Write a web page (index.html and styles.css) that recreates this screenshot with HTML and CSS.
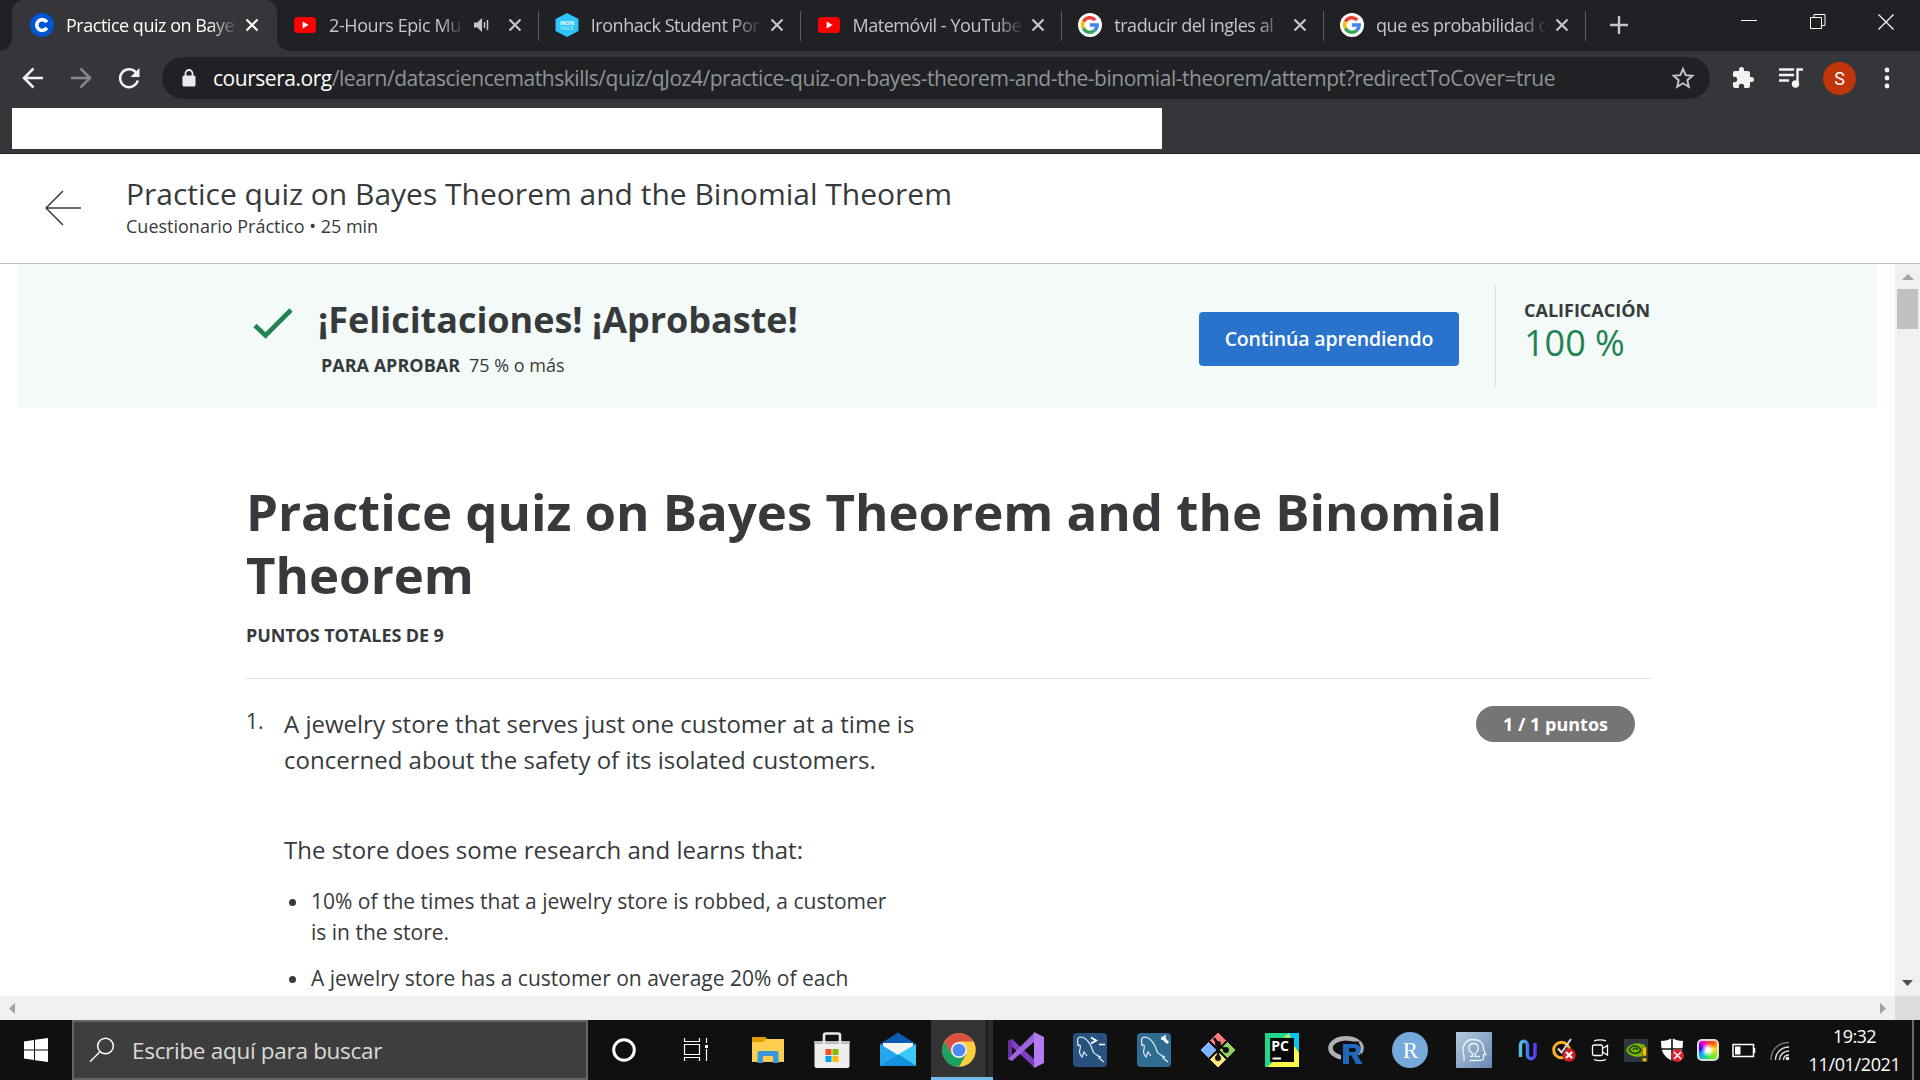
FILE: index.html
```html
<!DOCTYPE html>
<html lang="es">
<head>
<meta charset="utf-8">
<title>Practice quiz on Bayes Theorem and the Binomial Theorem</title>
<link rel="stylesheet" href="styles.css">
</head>
<body>
<svg class="defs" width="0" height="0" aria-hidden="true">
  <symbol id="close" viewBox="0 0 14 14"><path d="M1.5 1.5l11 11M12.5 1.5l-11 11" stroke="currentColor" stroke-width="2.2" fill="none"/></symbol>
  <symbol id="youtube" viewBox="0 0 22 16"><rect width="22" height="16" rx="3.6" fill="#f00"/><path d="M8.6 4.6v6.8l6-3.4z" fill="#fff"/></symbol>
  <symbol id="google" viewBox="0 0 24 24"><circle cx="12" cy="12" r="12" fill="#fff"/><g fill="none" stroke-width="3.4"><path d="M5.4 8.6A7.3 7.3 0 0 1 17.2 7" stroke="#ea4335"/><path d="M5.5 15.3a7.3 7.3 0 0 1 0-6.7" stroke="#fbbc05"/><path d="M16.7 17.5A7.3 7.3 0 0 1 5.4 15.2" stroke="#34a853"/><path d="M12 12h7.2a7.3 7.3 0 0 1-2.6 5.5" stroke="#4285f4"/></g></symbol>
</svg>

<header class="tabs">
  <div class="tab active">
    <svg class="fav" viewBox="0 0 24 24"><circle cx="12" cy="12" r="12" fill="#0056d2"/><path d="M16.8 9.2A5.4 5.4 0 1 0 16.8 14.8" fill="none" stroke="#fff" stroke-width="3.6"/></svg>
    <span class="label">Practice quiz on Baye</span>
    <svg class="x"><use href="#close"/></svg>
  </div>
  <div class="tab sep">
    <svg class="fav"><use href="#youtube" x="1" y="4" width="22" height="16"/></svg>
    <span class="label short">2-Hours Epic Mu</span>
    <svg class="audio" viewBox="0 0 16 14"><path d="M0 4.5h3.4L8 0v14L3.4 9.500H0z" fill="#c4c7ca"/><path d="M10.500 4v6M13.500 2v10" stroke="#c4c7ca" stroke-width="1.5"/></svg>
    <svg class="x"><use href="#close"/></svg>
  </div>
  <div class="tab sep">
    <svg class="fav" viewBox="0 0 24 24"><path d="M12 0l11.500 6v12L12 24 .5 18V6z" fill="#2dc5fa"/><text x="12" y="11.500" class="iron">IRON</text><text x="12" y="17" class="hack">HACK</text></svg>
    <span class="label">Ironhack Student Por</span>
    <svg class="x"><use href="#close"/></svg>
  </div>
  <div class="tab sep">
    <svg class="fav"><use href="#youtube" x="1" y="4" width="22" height="16"/></svg>
    <span class="label">Matemóvil - YouTube</span>
    <svg class="x"><use href="#close"/></svg>
  </div>
  <div class="tab sep">
    <svg class="fav"><use href="#google"/></svg>
    <span class="label">traducir del ingles al</span>
    <svg class="x"><use href="#close"/></svg>
  </div>
  <div class="tab sep">
    <svg class="fav"><use href="#google"/></svg>
    <span class="label">que es probabilidad c</span>
    <svg class="x"><use href="#close"/></svg>
  </div>
  <svg class="plus" viewBox="0 0 18 18"><path d="M9 0v18M0 9h18" stroke="#c4c7ca" stroke-width="2.4"/></svg>
  <div class="winctl">
    <svg viewBox="0 0 16 16"><path d="M0 6.500h16" stroke="#fff"/></svg>
    <svg viewBox="0 0 16 16"><path d="M.5 3.500h11v11H.5zM4 3V.5h11v11H12" stroke="#fff" fill="none"/></svg>
    <svg viewBox="0 0 16 16"><path d="M.5.5l15 15M15.500.5l-15 15" stroke="#fff" stroke-width="1.200"/></svg>
  </div>
</header>

<nav class="toolbar">
  <svg class="tb" viewBox="0 0 24 24"><path d="M22 12H3.500M12.500 2.500L3 12l9.500 9.500" stroke="#f1f3f4" stroke-width="2.500" fill="none"/></svg>
  <svg class="tb" viewBox="0 0 24 24"><path d="M2 12h18.500M11.500 2.500L21 12l-9.500 9.500" stroke="#86888b" stroke-width="2.500" fill="none"/></svg>
  <svg class="tb" viewBox="0 0 24 24"><path d="M19.600 7.200A9 9 0 1 0 20.800 14.500" stroke="#f1f3f4" stroke-width="2.500" fill="none"/><path d="M22.500 2v9h-9z" fill="#f1f3f4"/></svg>
  <div class="omnibox">
    <svg class="lock" viewBox="0 0 14 18"><rect x=".5" y="6.500" width="13" height="11" rx="1.500" fill="#e8eaed"/><path d="M3.500 7V4.500a3.500 3.500 0 0 1 7 0V7" fill="none" stroke="#e8eaed" stroke-width="1.800"/></svg>
    <span class="url"><b>coursera.org</b>/learn/datasciencemathskills/quiz/qJoz4/practice-quiz-on-bayes-theorem-and-the-binomial-theorem/attempt?redirectToCover=true</span>
    <svg class="star" viewBox="0 0 24 24"><path d="M12 3l2.700 6.200 6.700.6-5.100 4.400 1.500 6.600L12 17.300l-5.800 3.500 1.500-6.600-5.100-4.400 6.700-.6z" fill="none" stroke="#c4c7ca" stroke-width="1.900"/></svg>
  </div>
  <svg class="tb" viewBox="0 0 24 24"><path d="M20.500 11H19V7a2 2 0 0 0-2-2h-4V3.500a2.500 2.500 0 0 0-5 0V5H4a2 2 0 0 0-2 2v3.800h1.500a2.700 2.700 0 0 1 0 5.400H2V20a2 2 0 0 0 2 2h3.800v-1.500a2.700 2.700 0 0 1 5.400 0V22H17a2 2 0 0 0 2-2v-4h1.500a2.500 2.500 0 0 0 0-5z" fill="#f1f3f4"/></svg>
  <svg class="tb" viewBox="0 0 24 24"><path d="M0 3.500h15M0 9h15M0 14.500h10M18.500 18V3.500H24" stroke="#f1f3f4" stroke-width="2.400" fill="none"/><circle cx="16.500" cy="18" r="3.700" fill="#f1f3f4"/></svg>
  <span class="avatar">S</span>
  <svg class="dots" viewBox="0 0 6 22"><g fill="#f1f3f4"><circle cx="3" cy="3" r="2.400"/><circle cx="3" cy="11" r="2.400"/><circle cx="3" cy="19" r="2.400"/></g></svg>
</nav>
<div class="bookmarks"><div class="blank"></div></div>

<section class="page-head">
  <svg class="back" viewBox="0 0 36 36"><path d="M36 18H1.500M18 1L1 18l17 17" fill="none" stroke="#373a3c" stroke-width="1.500"/></svg>
  <div>
    <div class="course">Practice quiz on Bayes Theorem and the Binomial Theorem</div>
    <div class="kind">Cuestionario Práctico • 25 min</div>
  </div>
</section>

<div class="frame">
  <main class="view">
    <section class="banner">
      <svg class="check" viewBox="0 0 42 34"><path d="M3 18.500L13.500 28.500 39 3" fill="none" stroke="#1f8354" stroke-width="4.600"/></svg>
      <div class="congrats">
        <div class="big">¡Felicitaciones! ¡Aprobaste!</div>
        <div class="pass"><b>PARA APROBAR</b><span>75 % o más</span></div>
      </div>
      <div class="go">Continúa aprendiendo</div>
      <div class="grade">
        <div class="gl">CALIFICACIÓN</div>
        <div class="gv">100 %</div>
      </div>
    </section>
    <section class="quiz">
      <h1>Practice quiz on Bayes Theorem and the Binomial<br>Theorem</h1>
      <div class="total">PUNTOS TOTALES DE 9</div>
      <div class="question">
        <span class="num">1.</span>
        <div class="body">
          <p>A jewelry store that serves just one customer at a time is<br>concerned about the safety of its isolated customers.</p>
          <p>The store does some research and learns that:</p>
          <ul>
            <li>10% of the times that a jewelry store is robbed, a customer<br>is in the store.</li>
            <li>A jewelry store has a customer on average 20% of each</li>
          </ul>
        </div>
        <span class="pill">1 / 1 puntos</span>
      </div>
    </section>
  </main>
  <div class="vbar">
    <svg viewBox="0 0 25 25"><path d="M7 16h12l-6-6z" fill="#a3a3a3"/></svg>
    <i class="thumb"></i>
    <svg class="down" viewBox="0 0 25 25"><path d="M7 9h11l-5.500 6z" fill="#505050"/></svg>
  </div>
</div>
<div class="hbar">
  <svg viewBox="0 0 24 24"><path d="M15 7v11l-6-5.500z" fill="#a3a3a3"/></svg>
  <svg viewBox="0 0 24 24"><path d="M9 7v11l6-5.500z" fill="#a3a3a3"/></svg>
  <i class="corner"></i>
</div>

<footer class="taskbar">
  <div class="start"><svg width="24" height="24" viewBox="0 0 24 24"><path d="M0 3.400L10 2v9.500H0zM11 1.800L24 0v11.500H11zM0 12.500h10V22L0 20.600zM11 12.500h13V24l-13-1.800z" fill="#fff"/></svg></div>
  <div class="search"><svg class="lens" width="26" height="26" viewBox="0 0 26 26"><circle cx="16.500" cy="9" r="7.800" fill="none" stroke="#fff" stroke-width="1.500"/><path d="M11 14.800L1 24.800" stroke="#fff" stroke-width="1.500"/></svg><span>Escribe aquí para buscar</span></div>
  <div class="apps">
    <div class="app"><svg viewBox="0 0 36 36"><circle cx="18" cy="18" r="10.300" fill="none" stroke="#fff" stroke-width="3"/></svg></div>
    <div class="app wide"><svg viewBox="0 0 36 36"><path d="M6.500 6v3.500h15V6M6.500 12.500h15v10h-15zM6.500 29v-3.500h15V29M28.500 6v5M28.500 17v12" fill="none" stroke="#fff" stroke-width="1.200"/><path d="M27 13h3v3h-3z" fill="#fff"/></svg></div>
    <div class="app"><svg viewBox="0 0 36 36"><path d="M2 5h13l2 2h17v23H2z" fill="#ffce4f"/><path d="M2 5h13l1.500 2-3 3H2z" fill="#e09d00"/><path d="M7.500 31V21a2 2 0 0 1 2-2h17a2 2 0 0 1 2 2v10H23v-7H13v7z" fill="#3a97dc"/></svg></div>
    <div class="app"><svg viewBox="0 0 36 36"><path d="M.5 9h35v25a2 2 0 0 1-2 2h-31a2 2 0 0 1-2-2z" fill="#eee"/><path d="M.5 9h35v3H.5z" fill="#bdbdbd"/><path d="M10 12V3.500a2 2 0 0 1 2-2h12a2 2 0 0 1 2 2V12" fill="none" stroke="#e8e8e8" stroke-width="2.600"/><path d="M11.500 17h6v6h-6z" fill="#f25022"/><path d="M18.500 17h6v6h-6z" fill="#7fba00"/><path d="M11.500 24h6v6h-6z" fill="#00a4ef"/><path d="M18.500 24h6v6h-6z" fill="#ffb900"/></svg></div>
    <div class="app mail"><svg viewBox="0 0 36 36"><path d="M0 12L18 .5 36 12v8H0z" fill="#0a5cb0"/><path d="M3 11h30v12H3z" fill="#f4f4f4"/><path d="M0 12l36 22H0z" fill="#24a7ee"/><path d="M36 12v22L18 22.500z" fill="#3ccbf8"/><path d="M18 22.800L36 34H0z" fill="#1490df"/></svg></div>
    <div class="app current"><svg viewBox="0 0 36 36"><circle cx="18" cy="18" r="16.800" fill="#ffcd40"/><path d="M3.400 9.600A16.800 16.800 0 0 1 32.500 9.600H18L10.700 22.200z" fill="#dd5144"/><path d="M3.400 9.600A16.800 16.800 0 0 0 18 34.800L25.300 22.200 10.700 22.200z" fill="#1da160"/><circle cx="18" cy="18" r="8" fill="#f1f1f1"/><circle cx="18" cy="18" r="6.300" fill="#4c8bf5"/></svg></div>
    <div class="app"><svg viewBox="0 0 36 36"><path d="M0 9l4-2 23 21v8L0 11z" fill="#7c3fc4"/><path d="M0 9l4-2v22l-4-2z" fill="#68309f"/><path d="M0 27L27 0v9L4 29z" fill="#9e63df"/><path d="M26 0l10 5v26l-10 5z" fill="#b57bf0"/></svg></div>
    <div class="app"><svg viewBox="0 0 36 36"><rect x="1" y="1" width="34" height="34" rx="4" fill="#27527f"/><path d="M6 14C6 10 4 6 8 5c5 0 9 5 11 9s1 7 6 9c2 2 4 2 4 2l-2 1 5 4M6 14c2-2 3-1 2 3-1 3 0 6 2 8l2-5 3 4" fill="none" stroke="#e6edf4" stroke-width="1.200"/><path d="M19 5.500l5 3-5 3" fill="none" stroke="#fff" stroke-width="2"/><path d="M27 12.500h6" stroke="#fff" stroke-width="1.500"/></svg></div>
    <div class="app"><svg viewBox="0 0 36 36"><rect x="1" y="1" width="34" height="34" rx="4" fill="#2e6d91"/><path d="M6 14C6 10 4 6 8 5c5 0 9 5 11 9s1 7 6 9c2 2 4 2 4 2l-2 1 5 4M6 14c2-2 3-1 2 3-1 3 0 6 2 8l2-5 3 4" fill="none" stroke="#e6edf4" stroke-width="1.200"/><path d="M26 5l6 6" stroke="#fff" stroke-width="3"/><path d="M25 7h4V3" stroke="#fff" stroke-width="1.500" fill="none"/></svg></div>
    <div class="app"><svg viewBox="0 0 36 36"><g stroke="#101010" stroke-width="1"><path d="M18 0l8.500 8.500L18 17 9.500 8.500z" fill="#ff7b7b"/><path d="M8.500 9.500L17 18l-8.500 8.500L0 18z" fill="#80b3ff"/><path d="M27.500 9.500L36 18l-8.500 8.500L19 18z" fill="#8dd35f"/><path d="M18 19l8.500 8.500L18 36l-8.500-8.500z" fill="#ffe680"/></g><path d="M14 6l4 6v14M18 13l8 5" stroke="#101010" stroke-width="2.500" fill="none"/><circle cx="18" cy="12" r="3" fill="#101010"/><circle cx="26" cy="18" r="3" fill="#101010"/><circle cx="18" cy="26" r="3" fill="#101010"/></svg></div>
    <div class="app"><svg viewBox="0 0 36 36"><path d="M1 1h34v34H1z" fill="#21d789"/><path d="M21 1h14v18z" fill="#07c3f2"/><path d="M25 1l3 10 7 10v14H3l10-8z" fill="#fcf84a"/><path d="M19 5l6-4 2 6z" fill="#a6eb60"/><path d="M6 6h24v24H6z" fill="#080808"/><path d="M8.500 25.500h8.500v2H8.500z" fill="#fff"/><text x="7.200" y="19" class="pc">PC</text></svg></div>
    <div class="app"><svg viewBox="0 0 36 36"><ellipse cx="18" cy="16" rx="15.500" ry="9.800" fill="none" stroke="#b0b1b6" stroke-width="4.600"/><path d="M13 9.500h20v20H13z" fill="#101010"/><path d="M31.500 9.500c4 5 2 10-1.500 13" fill="none" stroke="#b0b1b6" stroke-width="2.500"/><path d="M15 12h11c9 0 8 10 3 11l5.500 9h-6.500l-4.500-8.500h-2.500V32h-6zM21 16v4h5c2.500 0 2.500-4 0-4z" fill="#2068bd" fill-rule="evenodd"/></svg></div>
    <div class="app"><svg viewBox="0 0 36 36"><circle cx="18" cy="18" r="18" fill="#75aadb"/><text x="18.500" y="25.500" class="rs">R</text></svg></div>
    <div class="app"><svg viewBox="0 0 36 36"><defs><linearGradient id="sp" x2="1" y2="1"><stop stop-color="#b4c9dc"/><stop offset="1" stop-color="#6789b3"/></linearGradient></defs><path d="M0 0h36v36H0z" fill="url(#sp)"/><path d="M8 29v-5C5 15 9 7.500 17 7.500c8 0 11 5 10.500 10l2.500 5h-2.500v4c0 2-3 2-6 2h-8M14 24.500h2.500v-3c-6-4-4-10 1-10s7 6 1.500 10v3H24" fill="none" stroke="#eef4fa" stroke-width="1.300"/></svg></div>
  </div>
  <div class="tray">
    <svg viewBox="0 0 24 24"><defs><linearGradient id="nn" x2="1"><stop stop-color="#55c3d8"/><stop offset=".6" stop-color="#3e6cf5"/><stop offset="1" stop-color="#5a3df0"/></linearGradient></defs><path d="M4.500 19V7.500c0-6 7-5.500 7 0v8.500c0 6.500 7.500 6 7.500 0V5" fill="none" stroke="url(#nn)" stroke-width="3.400"/></svg>
    <svg viewBox="0 0 24 24"><circle cx="9.500" cy="12" r="7.800" fill="none" stroke="#f9b11f" stroke-width="3"/><path d="M6 10.500l3.500 4L19 1" fill="none" stroke="#ddd" stroke-width="2"/><circle cx="17" cy="17" r="6.700" fill="#cf2027"/><path d="M14 14l6 6M20 14l-6 6" stroke="#fff" stroke-width="2.300"/></svg>
    <svg viewBox="0 0 24 24"><g fill="none" stroke="#fff" stroke-width="1.300"><rect x="4.500" y="7" width="10" height="10.500" rx="1.500"/><path d="M14.500 10.500l5-3v9.500l-5-3M6 3c3-1.600 9-1.600 12 0M6 21.500c3 1.600 9 1.600 12 0"/></g></svg>
    <svg viewBox="0 0 24 24"><path d="M0 1h24v23H0z" fill="#2e3640"/><path d="M2 12c4-8 13-7 19-5v11C11 20 4 18 2 12z" fill="#76b900"/><path d="M5 12c4-7 10-4 12 0-3 5-9 4-12 0zm4 0c2-3 4-2 5 0" fill="none" stroke="#263b18" stroke-width="1.500"/><path d="M18.500 9h4v9h-4zM18.500 20h4v3.500h-4z" fill="#f5c400" stroke="#5b4300" stroke-width=".6"/></svg>
    <svg viewBox="0 0 24 24"><path d="M12 0c3 2 7 3 11 3 0 10-2 15-11 20C3 18 1 13 1 3c4 0 8-1 11-3z" fill="#fff"/><path d="M12 0v23M0 11h24" stroke="#101010" stroke-width="1.600"/><circle cx="17.500" cy="17.500" r="6.500" fill="#d9262e"/><path d="M14 14l7 7M21 14l-7 7" stroke="#fff" stroke-width="1.500"/></svg>
    <span class="rgb"></span>
    <svg viewBox="0 0 24 24"><path d="M1 6.500h20.500v12H1zM22.500 10v5" fill="none" stroke="#fff" stroke-width="1.500"/><path d="M3 8.500h5.500v8H3z" fill="#fff"/></svg>
    <svg viewBox="0 0 24 24"><g fill="none" stroke-width="1.400"><path d="M3 22C3 12 10 4.500 21 4.500" stroke="#777"/><path d="M7.500 22c0-7.500 6-13 13.500-13M11.500 22c0-5 4-9 9.500-9M15.500 22c0-3 2-5 5.500-5" stroke="#ddd"/></g><circle cx="19.500" cy="20.500" r="1.800" fill="#fff"/></svg>
  </div>
  <div class="clock"><span class="time">19:32</span><span class="date">11/01/2021</span></div>
  <i class="peek"></i>
</footer>
</body>
</html>
```
FILE: styles.css
```css
* { box-sizing: border-box; }
body { margin: 0; width: 1920px; height: 1080px; overflow: hidden; background: #fff; color: #373a3c; font-family: "Open Sans", "Noto Sans", sans-serif; display: flex; flex-direction: column; }
svg { display: block; flex: none; }
.defs { position: absolute; }

/* Tab strip */
.tabs { height: 51px; flex: none; background: linear-gradient(90deg, #202124 12px, #35363a 12px 277px, #202124 277px); background: #202124; display: flex; padding-left: 12px; color: #c4c7ca; }
.tab { width: 261.750px; height: 51px; flex: none; display: flex; align-items: center; padding: 0 17px 2px 16px; font-size: 18px; letter-spacing: -0.460px; }
.tab.active { width: 265px; background: #35363a; color: #fff; border-radius: 12px 12px 0 0; padding: 0 18px 2px 18px; position: relative; letter-spacing: -0.480px; }
.tab.active::before, .tab.active::after { content: ""; position: absolute; bottom: 0; width: 12px; height: 12px; }
.tab.active::before { left: -12px; background: radial-gradient(circle at 0 0, transparent 11.500px, #35363a 12px); }
.tab.active::after { right: -12px; background: radial-gradient(circle at 100% 0, transparent 11.500px, #35363a 12px); }
.tab.sep { position: relative; }
.tab.sep::after { content: ""; position: absolute; right: 0; top: 11px; width: 1px; height: 30px; background: #5b5d61; }
.fav { width: 24px; height: 24px; }
.label { margin-left: 12px; width: 170px; flex: none; overflow: hidden; white-space: nowrap; line-height: 26px; -webkit-mask-image: linear-gradient(90deg, #000 84%, transparent 101%); mask-image: linear-gradient(90deg, #000 84%, transparent 101%); }
.label.short { width: 134px; letter-spacing: -0.400px; }
.audio { width: 16px; height: 14px; margin-left: 11px; }
.x { width: 14px; height: 14px; margin-left: auto; }
.iron { font: bold 5.500px "Open Sans", sans-serif; fill: #fff; text-anchor: middle; letter-spacing: 0; }
.hack { font: 5px "Open Sans", sans-serif; fill: #d4f3fe; text-anchor: middle; letter-spacing: 0; }
.plus { width: 18px; height: 18px; margin: 16px 0 0 24px; }
.winctl { margin-left: auto; padding: 14px 26px 0 0; display: flex; gap: 52.500px; }
.winctl svg { width: 16px; height: 16px; }

/* Address row */
.toolbar { height: 57px; flex: none; background: #35363a; display: flex; align-items: center; padding: 0 30px 3px 21px; gap: 24px; }
.tb { width: 24px; height: 24px; }
.omnibox { width: 1548px; flex: none; height: 42px; margin: 0 -3px; border-radius: 21px; background: #202124; display: flex; align-items: center; padding: 0 15px 0 20px; }
.lock { width: 14px; height: 18px; }
.url { margin-left: 17px; font-size: 21px; line-height: 30px; letter-spacing: -0.465px; color: #909397; white-space: nowrap; }
.url b { font-weight: 400; color: #fff; }
.star { width: 24px; height: 24px; margin-left: auto; }
.avatar { width: 33px; height: 33px; flex: none; border-radius: 50%; background: #c1350b; color: #fff; font: 18px/33px Roboto, sans-serif; text-align: center; margin-left: -4px; }
.dots { width: 6px; height: 22px; margin-left: 4px; }
.bookmarks { height: 46px; flex: none; background: #35363a; border-bottom: 1px solid #27282a; padding-left: 12px; }
.blank { width: 1150px; height: 41px; background: #fff; }

/* Page header */
.page-head { height: 110px; flex: none; border-bottom: 1px solid #bdbdbd; display: flex; padding: 20px 0 0 45px; gap: 45px; }
.back { width: 36px; height: 36px; margin-top: 16px; }
.course { font-size: 30px; line-height: 40px; }
.kind { font-size: 18px; line-height: 24px; }

.frame { height: 732px; flex: none; display: flex; overflow: hidden; }
.view { width: 1895px; padding: 0 18px; overflow: hidden; }
.banner { height: 144px; background: #f4faf8; display: flex; padding-left: 234px; }
.check { width: 42px; height: 34px; margin-top: 43px; }
.congrats { width: 905px; padding: 32px 0 0 24px; }
.big { font-size: 36px; line-height: 48px; font-weight: 700; letter-spacing: -0.030px; }
.pass { font-size: 18px; line-height: 24px; margin: 9px 0 0 3px; display: flex; gap: 9px; }
.go { width: 260px; height: 54px; flex: none; margin-top: 48px; border-radius: 4px; background: #2a73cc; color: #fff; font-size: 19.500px; font-weight: 600; letter-spacing: -0.150px; line-height: 54px; text-align: center; }
.grade { margin: 21px 0 0 36px; height: 102px; border-left: 1px solid #dcdfde; padding: 13px 0 0 28px; }
.gl { font-size: 18px; line-height: 24px; font-weight: 700; }
.gv { font-size: 36px; line-height: 42px; color: #1f8354; }

.quiz { width: 1405px; margin-left: 228px; padding-top: 72px; }
h1 { margin: 0; font-size: 51px; line-height: 63px; font-weight: 700; letter-spacing: -0.030px; white-space: nowrap; }
.total { font-size: 18px; line-height: 24px; font-weight: 700; letter-spacing: -0.100px; padding: 17px 0 31px; border-bottom: 1px solid #e1e1e1; }
.question { display: flex; padding-top: 27px; white-space: nowrap; }
.num { width: 38px; font-size: 21px; line-height: 30px; }
.body { width: 1192px; }
.body p { margin: 0 0 54px; font-size: 24px; line-height: 36px; }
.body p + p { margin-bottom: 18px; }
ul { margin: 0; padding-left: 27px; list-style: none; }
li { position: relative; font-size: 21px; line-height: 31px; margin-bottom: 15px; }
li::before { content: ""; position: absolute; left: -22px; top: 13px; width: 7px; height: 7px; border-radius: 50%; background: #373a3c; }
.pill { width: 159px; height: 36px; flex: none; border-radius: 18px; background: #757575; color: #fff; font-size: 18px; line-height: 36px; font-weight: 700; text-align: center; }

/* Scrollbars */
.vbar { width: 25px; background: #f0f0f0; display: flex; flex-direction: column; align-items: center; }
.vbar svg { width: 25px; height: 25px; }
.thumb { width: 21px; height: 40px; background: #c1c1c1; }
.vbar .down { margin-top: auto; }
.hbar { height: 24px; flex: none; background: #f0f0f0; display: flex; }
.hbar svg { width: 24px; height: 24px; }
.hbar svg + svg { margin-left: auto; }
.corner { width: 25px; background: #dcdcdc; }

/* Taskbar */
.taskbar { height: 60px; flex: none; background: #101010; display: flex; }
.start { width: 72px; display: grid; place-items: center; }
.search { width: 516px; border: 2px solid #656565; background: #3e3e3e; color: #dadada; display: flex; padding: 13px 0 0 15px; gap: 17px; font-size: 22.500px; line-height: 32px; letter-spacing: -0.300px; white-space: nowrap; }
.lens { margin-top: 2px; }
.apps { width: 922px; padding-left: 4px; display: flex; }
.app { width: 64px; flex: none; display: grid; place-items: center; }
.app svg { width: 36px; height: 36px; }
.app.wide { width: 80px; }
.app.mail { width: 66px; padding-left: 2px; }
.app.current { width: 62px; margin: 0 1px; padding: 3px 6px 0 0; background: linear-gradient(90deg, #333 55px, #1d1d1d 55px 57px, #2b2b2b 57px); border-bottom: 3px solid #76b9ed; }
.pc { font: bold 14px "Open Sans", sans-serif; fill: #fff; }
.rs { font: 23px "Liberation Serif", serif; fill: #fff; text-anchor: middle; }
.tray { width: 288px; display: flex; align-items: center; gap: 12px; padding-left: 6px; }
.tray svg { width: 24px; height: 24px; }
.rgb { width: 22px; height: 22px; margin: 0 1px; border: 2px solid #ddd; border-radius: 5px; background: radial-gradient(circle, #fff 0 15%, transparent 55%), conic-gradient(#f33, #f60 45deg, #fd0 80deg, #3e3 170deg, #0af 240deg, #30f 280deg, #f0c 330deg, #f33); }
.clock { width: 113px; padding-top: 2px; display: flex; flex-direction: column; align-items: center; color: #fff; font-size: 18px; line-height: 28px; }
.time { letter-spacing: -0.580px; }
.date { letter-spacing: -0.360px; }
.peek { width: 2px; background: #6a6a6a; margin-left: 1px; }
```
